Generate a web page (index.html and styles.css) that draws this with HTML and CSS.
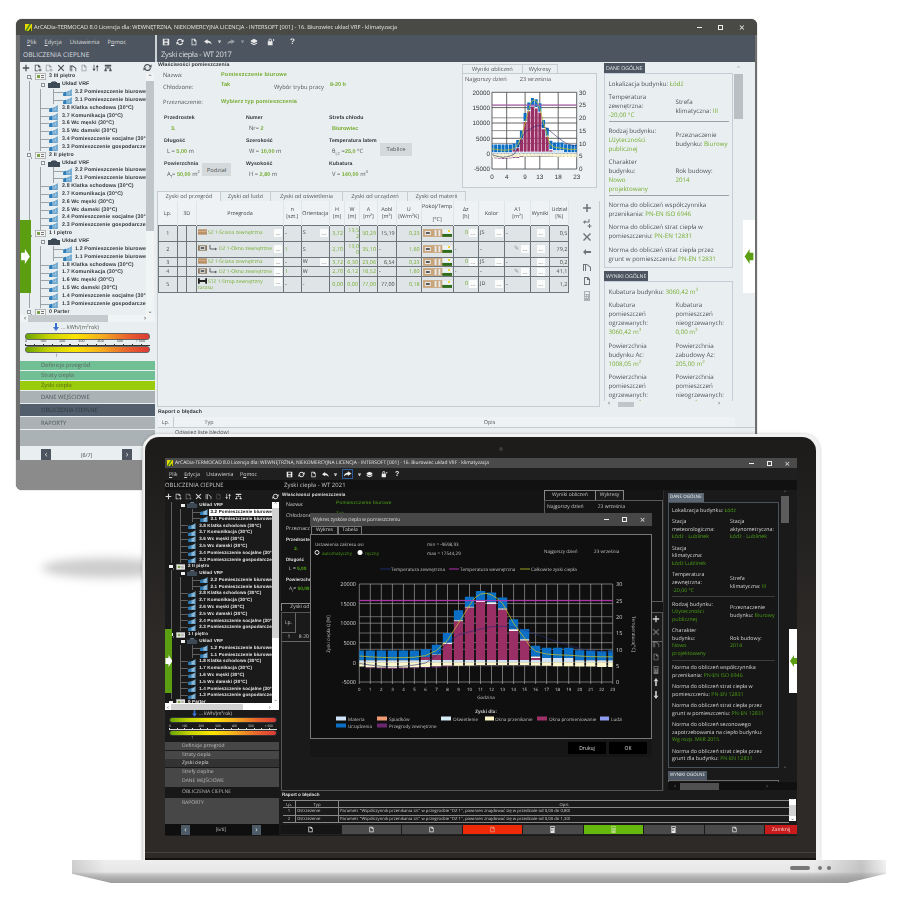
FILE: index.html
```html
<!DOCTYPE html>
<html lang="pl">
<head>
<meta charset="utf-8">
<title>ArCADia-TERMOCAD</title>
<link rel="stylesheet" href="styles.css">
</head>
<body>
<svg class="defs" aria-hidden="true">
  <defs>
    <symbol id="rm" viewBox="0 0 10 8"><path fill="#2f7db8" d="M0 4l3-1 1 1v4H0z"/><path fill="#6fa8cf" d="M4 8V3l3-1 3-2v8z"/><path fill="#e8f2f8" d="M5 5h1v1H5zM7 3h1v1H7zM7 5h1v1H7z"/></symbol>
    <symbol id="sys" viewBox="0 0 12 7"><path fill="#3d4a55" d="M0 2h3V1h6v1h3v5H0z"/><path fill="#8d9aa5" d="M4 0h4v1H4z"/></symbol>
    <symbol id="flr" viewBox="0 0 11 7"><path fill="#f4f4f4" stroke="#777" stroke-width=".6" d="M.3.3h10.4v6.4H.3z"/><path fill="#7da04a" d="M2 2h3v3H2z"/><path fill="#777" d="M6 2h3v1H6zM6 4h3v1H6z"/></symbol>
    <symbol id="i-plus" viewBox="0 0 10 10"><path d="M4.2 1h1.6v3.2H9v1.6H5.8V9H4.2V5.8H1V4.2h3.2z"/></symbol>
    <symbol id="i-x" viewBox="0 0 10 10"><path d="M2 1l3 3 3-3 1 1-3 3 3 3-1 1-3-3-3 3-1-1 3-3-3-3z"/></symbol>
    <symbol id="i-docp" viewBox="0 0 10 10"><path d="M1 1h5l2 2v2H7V4H5V2H2v6h3v1H1z"/><path d="M7 5.500h1V7h1.500v1H8v1.500H7V8H5.500V7H7z"/></symbol>
    <symbol id="i-roof" viewBox="0 0 10 10"><path d="M1 9V2h4l4 3v4H8V5.500L4.700 3H4v6H3V3H2v6z"/></symbol>
    <symbol id="i-doc" viewBox="0 0 10 10"><path fill-rule="evenodd" d="M2 1h4l2 2v6H2zM3 2v6h4V4H5V2z"/></symbol>
    <symbol id="i-sort" viewBox="0 0 10 10"><path d="M2 1h1v5h1.500L2.500 9 .5 6H2zM7 9H6V4H4.500l2-3 2 3H7z"/></symbol>
    <symbol id="i-tree" viewBox="0 0 10 10"><path d="M1 1h8v2H5.500v1.500H8.500V7h1v2h-3V7h1V5.500h-5V7h1v2h-3V7h1V4.500h3V3H1z"/></symbol>
    <symbol id="i-sync" viewBox="0 0 10 10"><path d="M5 1a4 4 0 0 1 3.300 1.700L9.500 1.500V5H6l1.400-1.400A3 3 0 0 0 2.200 4.500H1.100A4 4 0 0 1 5 1zM5 9a4 4 0 0 1-3.300-1.700L.5 8.500V5H4L2.600 6.400a3 3 0 0 0 5.200-.9h1.100A4 4 0 0 1 5 9z"/></symbol>
    <symbol id="i-save" viewBox="0 0 10 10"><path fill-rule="evenodd" d="M1 1h7.500L9 1.500V9H1zM3 2v2.500h4V2zM3 6v2h4V6z"/></symbol>
    <symbol id="i-undo" viewBox="0 0 10 10"><path d="M4.500 1.500L0 4.500l4.500 3V6c2.500 0 4 .8 5 2.500C9.500 5.500 7.500 3.500 4.500 3.200z"/></symbol>
    <symbol id="i-redo" viewBox="0 0 10 10"><path d="M5.500 1.500L10 4.500l-4.500 3V6c-2.500 0-4 .8-5 2.500C.5 5.500 2.500 3.500 5.500 3.200z"/></symbol>
    <symbol id="i-drop" viewBox="0 0 10 10"><path d="M2 2h6v1H2zM2 4.500h6L5 8.500z"/></symbol>
    <symbol id="i-stack" viewBox="0 0 10 10"><path d="M5 1l4 2v1.500L5 6.500 1 4.500V3zM1 5.500l4 2 4-2v1.500l-4 2-4-2z"/></symbol>
    <symbol id="i-lock" viewBox="0 0 10 10"><path fill-rule="evenodd" d="M1 4h1V2.500a2 2 0 0 1 4 0V4h1v5H1zM3 4h2V2.500a1 1 0 0 0-2 0z"/><path d="M7.500 1l2 1.500-2 1.500z"/></symbol>
    <symbol id="i-back" viewBox="0 0 10 10"><path d="M4 2L1 5l3 3V6h5V4H4z"/></symbol>
    <symbol id="i-ins" viewBox="0 0 10 10"><path d="M1 4l2.500-2v1.500h3V1h1v3.500h-4.500V6zM7 6h1v1.500h1.500v1H8V10H7V8.500H5.500v-1H7z"/></symbol>
    <symbol id="i-calc" viewBox="0 0 10 10"><path fill-rule="evenodd" d="M2 0h6v10H2zM3 1v2h4V1zM3 4v1h1V4zM5 4v1h1V4zM3 6v1h1V6zM5 6v1h1V6z"/></symbol>
    <symbol id="i-up" viewBox="0 0 10 10"><path d="M5 0l3 4H6v6H4V4H2z"/></symbol>
    <symbol id="i-down" viewBox="0 0 10 10"><path d="M5 10L2 6h2V0h2v6h2z"/></symbol>
    <symbol id="logo" viewBox="0 0 8 8"><path fill="#e8d800" d="M0 0h8v8H0z"/><path fill="#3f8a1e" d="M0 8L5 0h2L2 8z"/><path fill="#1d4a10" d="M4 8l3-4v4z"/></symbol>
    <symbol id="strip" viewBox="0 0 30 8"><path fill="#c9a57c" d="M0 0h30v8H0z"/><path fill="#e8e8e8" d="M2 2h6v4H2zM12 1h2v6h-2zM16 1h2v6h-2z"/><path fill="#555" d="M3 3h4v2H3z"/><path fill="#ecf3f5" d="M20 0h10v5H20z"/><path fill="#2e6d1c" d="M20 5h10v3H20z"/><path fill="#f1d21c" d="M26 1h2v2h-2z"/></symbol>
    <symbol id="sc-w" viewBox="0 0 10 6"><path fill="#b9926a" d="M0 0h10v6H0z"/><path fill="#d5b28c" d="M0 2h10v1H0z"/></symbol>
    <symbol id="sc-o" viewBox="0 0 10 6"><path fill="#8e7a62" d="M0 0h10v6H0z"/><path fill="#dfe4e6" d="M2 1h6v4H2z"/><path fill="#555" d="M3 2h4v2H3z"/></symbol>
    <symbol id="sc-s" viewBox="0 0 10 6"><path fill="#222" d="M0 0h2v6H0zM8 0h2v6H8zM2 2h6v2H2z"/></symbol>
    <symbol id="sc-l" viewBox="0 0 10 6"><path fill="none" stroke="#444" stroke-width=".8" d="M2 0v4h6M7 3l1.500 1L7 5"/></symbol>
    <g id="bars">
      <path class="b-blue" d="M-.42 3h.84V.5h-.84zM.58 3h.84V.5h-.84zM1.580 3h.84V.5h-.84zM2.580 3h.84V.5h-.84zM3.580 3h.84V.5h-.84zM4.580 3h.84V.5h-.84zM5.580 3.300h.84V1.300h-.84zM6.580 4.500h.84V2h-.84zM7.580 7.500h.84V5h-.84zM8.580 13.300h.84V10.700h-.84zM9.580 16.700h.84V14.200h-.84zM10.580 18.200h.84V15.700h-.84zM11.580 17.800h.84V15.300h-.84zM12.580 16.500h.84V13.700h-.84zM13.580 11h.84V8.400h-.84zM14.580 8.500h.84V5.900h-.84zM15.580 4.200h.84V1.500h-.84zM16.580 3.700h.84V1.100h-.84zM17.580 3.700h.84V1.100h-.84zM18.580 3.700h.84V1.100h-.84zM19.580 3.100h.84V.5h-.84zM20.580 3h.84V.5h-.84zM21.580 2.900h.84V.5h-.84zM22.580 3h.84V.5h-.84z"/>
      <path class="b-white" d="M6.580 2h.84V1.800h-.84zM7.580 5h.84V4.700h-.84zM8.580 10.700h.84V10.400h-.84zM9.580 14.200h.84V13.900h-.84zM10.580 15.700h.84V15.400h-.84zM11.580 15.300h.84V14.800h-.84zM12.580 13.700h.84V13.400h-.84zM13.580 8.400h.84V8h-.84zM14.580 5.900h.84V5.500h-.84zM15.580 1.500h.84V1.100h-.84z"/>
      <path class="b-purple" d="M5.580 1.300h.84V.6h-.84zM6.580 1.800h.84V.6h-.84zM7.580 4.700h.84V.6h-.84zM8.580 10.400h.84V.6h-.84zM9.580 13.900h.84V.6h-.84zM10.580 15.400h.84V.6h-.84zM11.580 14.800h.84V.6h-.84zM12.580 13.400h.84V.6h-.84zM13.580 8h.84V.6h-.84zM14.580 5.500h.84V.6h-.84zM15.580 1.100h.84V.6h-.84z"/>
      <path class="b-light" d="M-.42 .5h.84V0h-.84zM.58 .5h.84V0h-.84zM1.580 .5h.84V0h-.84zM2.580 .5h.84V0h-.84zM3.580 .5h.84V0h-.84zM4.580 .5h.84V0h-.84zM5.580 .6h.84V0h-.84zM6.580 .6h.84V0h-.84zM7.580 .6h.84V0h-.84zM8.580 .6h.84V0h-.84zM9.580 .6h.84V0h-.84zM10.580 .6h.84V0h-.84zM11.580 .6h.84V0h-.84zM12.580 .6h.84V0h-.84zM13.580 .6h.84V0h-.84zM14.580 .6h.84V0h-.84zM15.580 .6h.84V0h-.84zM16.580 1.100h.84V0h-.84zM17.580 1.100h.84V0h-.84zM18.580 1.100h.84V0h-.84zM19.580 .5h.84V0h-.84zM20.580 .5h.84V0h-.84zM21.580 .5h.84V0h-.84zM22.580 .5h.84V0h-.84z"/>
      <path class="b-cream" d="M-.42 0h.84V-1.100h-.84zM.58 0h.84V-1.300h-.84zM1.580 0h.84V-1.400h-.84zM2.580 0h.84V-1.500h-.84zM3.580 0h.84V-1.400h-.84zM4.580 0h.84V-1.300h-.84zM5.580 0h.84V-1.200h-.84zM6.580 0h.84V-1.100h-.84zM7.580 0h.84V-.9h-.84zM8.580 0h.84V-.9h-.84zM9.580 0h.84V-.8h-.84zM10.580 0h.84V-.7h-.84zM11.580 0h.84V-.7h-.84zM12.580 0h.84V-.7h-.84zM13.580 0h.84V-.7h-.84zM14.580 0h.84V-.7h-.84zM15.580 0h.84V-.8h-.84zM16.580 0h.84V-.9h-.84zM17.580 0h.84V-1h-.84zM18.580 0h.84V-1h-.84zM19.580 0h.84V-1.100h-.84zM20.580 0h.84V-1.100h-.84zM21.580 0h.84V-1.200h-.84zM22.580 0h.84V-1.200h-.84z"/>
      <path class="b-dark" d="M.58 -1.300h.84v-.2h-.84zM1.580 -1.400h.84v-.2h-.84zM2.580 -1.500h.84v-.2h-.84zM3.580 -1.400h.84v-.2h-.84zM4.580 -1.300h.84v-.2h-.84zM5.580 -1.200h.84v-.2h-.84zM6.580 -1.100h.84v-.2h-.84zM7.580 -.9h.84v-.2h-.84z"/>
      <polyline class="l-navy" points="0,-.3 1,-.7 2,-1 3,-1.2 4,-1 5,-.7 6,-.2 7,1.800 8,5 9,7 10,7.800 11,8.500 12,9.100 13,9.200 14,9 15,8.200 16,7.200 17,6.200 18,5.200 19,4.300 20,3.500 21,3 22,2.700 23,2.600"/>
      <polyline class="l-olive" points="0,1.600 1,1.400 2,1.250 3,1.150 4,1.200 5,1.300 6,1.700 7,3 8,5.600 9,10 10,14.500 10.500,16.500 11,17.400 11.500,17.600 12,17.200 12.500,16.300 13,15 13.500,12.500 14,10 14.500,8 15,6.200 15.500,4 16,2.800 17,2.100 18,1.900 19,1.800 20,1.600 21,1.450 22,1.400 23,1.400"/>
    </g>
    <clipPath id="clip-s"><rect x="492" y="80" width="84.700" height="100"/></clipPath>
    <clipPath id="clip-b"><rect x="359.300" y="570" width="253.400" height="120"/></clipPath>
  </defs>
</svg>

<main class="canvas">
  <div class="shadow"></div>

  <!-- back window -->
  <section class="win">
    <header class="w-title">
      <svg class="w-logo"><use href="#logo"/></svg>
      <span class="w-title-text">ArCADia-TERMOCAD 8.0 Licencja dla: WEWNĘTRZNA, NIEKOMERCYJNA LICENCJA - INTERSOFT [001] - 16. Biurowiec układ VRF - klimatyzacja</span>
      <span class="w-ctrls"><i class="c-min"></i><i class="c-max"></i><i class="c-x">×</i></span>
    </header>
    <div class="w-inner">
      <div class="w-head">
        <div class="w-head-l">
          <nav class="w-menu"><span><u>P</u>lik</span><span><u>E</u>dycja</span><span>Ustawienia</span><span>P<u>o</u>moc</span></nav>
          <div class="w-h1">OBLICZENIA CIEPLNE</div>
        </div>
        <div class="w-head-r">
          <div class="w-tools">
            <svg><use href="#i-save"/></svg><svg><use href="#i-sync"/></svg><svg><use href="#i-doc"/></svg><svg><use href="#i-undo"/></svg><svg class="sm"><use href="#i-drop"/></svg><svg class="dim"><use href="#i-redo"/></svg><svg class="sm dim"><use href="#i-drop"/></svg><svg><use href="#i-stack"/></svg><svg class="gap"><use href="#i-lock"/></svg><b>?</b>
          </div>
          <div class="w-h2">Zyski ciepła - WT 2017</div>
        </div>
      </div>
      <div class="w-body">
        <aside class="left">
          <div class="ltools">
            <svg><use href="#i-plus"/></svg><svg><use href="#i-docp"/></svg><svg class="dim"><use href="#i-docp"/></svg><svg><use href="#i-x"/></svg><svg><use href="#i-roof"/></svg><svg class="dim"><use href="#i-doc"/></svg><svg><use href="#i-sort"/></svg><svg><use href="#i-tree"/></svg><svg class="push"><use href="#i-sync"/></svg>
          </div>
          <div class="treebox">
            <div class="tree">
              <div class="tr l0"><i class="exp"></i><svg class="ti"><use href="#flr"/></svg>3 III piętro</div>
              <div class="tr l1"><i class="exp"></i><svg class="ti"><use href="#sys"/></svg>Układ VRF</div>
              <div class="tr l3"><svg class="ti"><use href="#rm"/></svg>3.2 Pomieszczenie biurowe</div>
              <div class="tr l3"><svg class="ti"><use href="#rm"/></svg>3.1 Pomieszczenie biurowe</div>
              <div class="tr l2"><svg class="ti"><use href="#rm"/></svg>3.8 Klatka schodowa (30°C)</div>
              <div class="tr l2"><svg class="ti"><use href="#rm"/></svg>3.7 Komunikacja (30°C)</div>
              <div class="tr l2"><svg class="ti"><use href="#rm"/></svg>3.6 Wc męski (30°C)</div>
              <div class="tr l2"><svg class="ti"><use href="#rm"/></svg>3.5 Wc damski (30°C)</div>
              <div class="tr l2"><svg class="ti"><use href="#rm"/></svg>3.4 Pomieszczenie socjalne (30°C)</div>
              <div class="tr l2"><svg class="ti"><use href="#rm"/></svg>3.3 Pomieszczenie gospodarcze</div>
              <div class="tr l0"><i class="exp"></i><svg class="ti"><use href="#flr"/></svg>2 II piętro</div>
              <div class="tr l1"><i class="exp"></i><svg class="ti"><use href="#sys"/></svg>Układ VRF</div>
              <div class="tr l3"><svg class="ti"><use href="#rm"/></svg>2.2 Pomieszczenie biurowe</div>
              <div class="tr l3"><svg class="ti"><use href="#rm"/></svg>2.1 Pomieszczenie biurowe</div>
              <div class="tr l2"><svg class="ti"><use href="#rm"/></svg>2.8 Klatka schodowa (30°C)</div>
              <div class="tr l2"><svg class="ti"><use href="#rm"/></svg>2.7 Komunikacja (30°C)</div>
              <div class="tr l2"><svg class="ti"><use href="#rm"/></svg>2.6 Wc męski (30°C)</div>
              <div class="tr l2"><svg class="ti"><use href="#rm"/></svg>2.5 Wc damski (30°C)</div>
              <div class="tr l2"><svg class="ti"><use href="#rm"/></svg>2.4 Pomieszczenie socjalne (30°C)</div>
              <div class="tr l2"><svg class="ti"><use href="#rm"/></svg>2.3 Pomieszczenie gospodarcze</div>
              <div class="tr l0"><i class="exp"></i><svg class="ti"><use href="#flr"/></svg>1 I piętro</div>
              <div class="tr l1"><i class="exp"></i><svg class="ti"><use href="#sys"/></svg>Układ VRF</div>
              <div class="tr l3"><svg class="ti"><use href="#rm"/></svg>1.2 Pomieszczenie biurowe</div>
              <div class="tr l3"><svg class="ti"><use href="#rm"/></svg>1.1 Pomieszczenie biurowe</div>
              <div class="tr l2"><svg class="ti"><use href="#rm"/></svg>1.8 Klatka schodowa (30°C)</div>
              <div class="tr l2"><svg class="ti"><use href="#rm"/></svg>1.7 Komunikacja (30°C)</div>
              <div class="tr l2"><svg class="ti"><use href="#rm"/></svg>1.6 Wc męski (30°C)</div>
              <div class="tr l2"><svg class="ti"><use href="#rm"/></svg>1.5 Wc damski (30°C)</div>
              <div class="tr l2"><svg class="ti"><use href="#rm"/></svg>1.4 Pomieszczenie socjalne (30°C)</div>
              <div class="tr l2"><svg class="ti"><use href="#rm"/></svg>1.3 Pomieszczenie gospodarcze</div>
              <div class="tr l0"><i class="exp"></i><svg class="ti"><use href="#flr"/></svg>0 Parter</div>
            </div>
            <div class="vscroll"><span class="sb-up">⌃</span><i class="thumb"></i><span class="sb-dn">⌄</span></div>
          </div>
          <div class="hscroll"><span>‹</span><i></i><span>›</span></div>
          <div class="scale">
            <div class="sc-top"><svg class="sc-arrow" viewBox="0 0 6 8"><path fill="#3d6fd0" d="M2 0h2v4h2L3 8 0 4h2z"/></svg><span>... kWh/(m²rok)</span></div>
            <div class="sc-bar"></div>
            <div class="sc-labels"><span>0</span><span>100</span><span>200</span><span>300</span><span>400</span><span>500</span><span>&gt; 500</span></div>
            <div class="sc-ticks"></div>
            <div class="sc-bar"></div>
            <div class="sc-pin">↑</div>
          </div>
          <nav class="lnav">
            <a class="n-g">Definicje przegród</a>
            <a class="n-g">Straty ciepła</a>
            <a class="n-a">Zyski ciepła</a>
            <a class="n-m">DANE WEJŚCIOWE</a>
            <a class="n-m n-on">OBLICZENIA CIEPLNE</a>
            <a class="n-m">RAPORTY</a>
            <a class="n-e"></a>
          </nav>
          <div class="pager"><i>‹</i><span>[6/7]</span><i>›</i></div>
        </aside>
        <div class="center">
          <div class="upper">
            <div class="mainp">
              <div class="top">
                <form class="form">
                  <div class="f-title">Właściwości pomieszczenia</div>
                  <div class="f-row f-r1"><span class="f-lab">Nazwa:</span><span class="f-val">Pomieszczenie biurowe</span></div>
                  <div class="f-row f-r2"><span class="f-lab">Chłodzone:</span><span class="f-val f-s">Tak</span><span class="f-lab f-w">Wybór trybu pracy</span><span class="f-val f-s">8-20 h</span></div>
                  <div class="f-row f-r3"><span class="f-lab">Przeznaczenie:</span><span class="f-val">Wybierz typ pomieszczenia</span></div>
                  <div class="f-grid">
                    <div class="cell"><b>Przedrostek</b><p class="ind"><em>3.</em></p></div>
                    <div class="cell"><b>Numer</b><p>Nr= <em>2</em></p></div>
                    <div class="cell"><b>Strefa chłodu</b><p><em>Biurowiec</em></p></div>
                    <div class="cell"><b>Długość</b><p>L = <em>5,00</em> m</p></div>
                    <div class="cell"><b>Szerokość</b><p>W = <em>10,00</em> m</p></div>
                    <div class="cell"><b>Temperatura latem</b><p class="withbtn"><span>θ<sub>i,C</sub> =<em>25,0</em> °C</span><button type="button" class="btn btn-t">Tablice</button></p></div>
                    <div class="cell cell-pw"><b>Powierzchnia</b><p>A<sub>f</sub>= <em>50,00</em> m<sup>2</sup></p><button type="button" class="btn btn-p">Podział</button></div>
                    <div class="cell"><b>Wysokość</b><p>H = <em>2,80</em> m</p></div>
                    <div class="cell"><b>Kubatura</b><p>V = <em>140,00</em> m<sup>3</sup></p></div>
                  </div>
                </form>
                <div class="cpanel">
                  <div class="ctabs"><span>Wyniki obliczeń</span><span class="on">Wykresy</span></div>
                  <div class="cbox">
                    <div class="cinfo"><span>Najgorszy dzień</span><span>23 września</span></div>
                    <svg class="chart-s" viewBox="462 84 135 104">
                      <rect x="492" y="92.300" width="84.700" height="76.700" class="bgw"/>
                      <path class="g-s" d="M492 92.300V169M506.700 92.300V169M525.100 92.300V169M539.800 92.300V169M558.200 92.300V169M576.700 92.300V169M492 92.300H576.700M492 107.600H576.700M492 123H576.700M492 138.300H576.700M492 153.700H576.700M492 169H576.700"/>
                      <path class="g-s2" d="M492 105.100H576.700M492 117.800H576.700M492 130.600H576.700M492 143.400H576.700M492 156.200H576.700"/>
                      <g clip-path="url(#clip-s)"><use href="#bars" transform="translate(492 153.700) scale(3.680 -3.060)"/></g>
                      <path class="l-mag" d="M492 105.100H576.700"/>
                      <g class="t-s t-end"><text x="490" y="94.500">20000</text><text x="490" y="109.800">15000</text><text x="490" y="125.200">10000</text><text x="490" y="140.500">5000</text><text x="490" y="155.900">0</text><text x="490" y="171.200">-5000</text></g>
                      <g class="t-s"><text x="579" y="94.500">30</text><text x="579" y="107.300">25</text><text x="579" y="120">20</text><text x="579" y="132.800">15</text><text x="579" y="145.600">10</text><text x="579" y="158.400">5</text><text x="579" y="171.200">0</text></g>
                      <g class="t-s t-mid"><text x="492" y="179">0</text><text x="506.700" y="179">4</text><text x="525.100" y="179">9</text><text x="539.800" y="179">13</text><text x="558.200" y="179">18</text><text x="576.700" y="179">23</text></g>
                    </svg>
                  </div>
                </div>
              </div>
              <div class="ttabs"><span class="on">Zyski od przegród</span><span>Zyski od ludzi</span><span>Zyski od oświetlenia</span><span>Zyski od urządzeń</span><span>Zyski od materii</span></div>
              <div class="tbox">
                <table class="grid">
                  <colgroup><col class="c1"><col class="c2"><col class="c3"><col class="c3b"><col class="c4"><col class="c5"><col class="c5"><col class="c6"><col class="c7"><col class="c8"><col class="c9"><col class="c10"><col class="c11"><col class="c11"><col class="c12"><col class="c13"></colgroup>
                  <thead>
                    <tr><th>Lp.</th><th>3D</th><th>Przegroda</th><th>n<br>[szt.]</th><th>Orientacja</th><th>H<br>[m]</th><th>W<br>[m]</th><th>A<br>[m²]</th><th>Aobl<br>[m²]</th><th>U<br>[W/m²K]</th><th>Pokój/Temp<br><br>[°C]</th><th>Δz<br>[h]</th><th>Kolor</th><th>A1<br>[m²]</th><th>Wyniki</th><th>Udział<br>[%]</th></tr>
                  </thead>
                  <tbody>
                    <tr class="r-a"><td class="m">1</td><td class="split"></td><td class="g"><span class="d">...</span><svg class="sw"><use href="#sc-w"/></svg>SZ 1-Ściana zewnętrzna</td><td>-</td><td><span class="d">...</span>S</td><td class="g n">3,72</td><td class="g n wrap">13,5 2</td><td class="g n">50,29</td><td class="n">15,19</td><td class="g n">0,23</td><td class="m"><svg class="st"><use href="#strip"/></svg></td><td class="g n"><span class="d">...</span>0</td><td><span class="d">...</span>JS</td><td>-</td><td class="m"><span class="d dc">...</span></td><td class="n">0,5</td></tr>
                    <tr class="r-a"><td class="m">2</td><td class="split"></td><td class="g"><span class="d">...</span><svg class="sw"><use href="#sc-o"/></svg><svg class="sl"><use href="#sc-l"/></svg>DZ 1-Okno zewnętrzne</td><td class="g">1</td><td>S</td><td class="g n">2,70</td><td class="g n wrap">13,0 0</td><td class="g n">35,10</td><td>-</td><td class="g n">1,60</td><td class="m"><svg class="st"><use href="#strip"/></svg></td><td>-</td><td>-</td><td><span class="d">...</span><span class="pen">✎</span></td><td class="m"><span class="d dc">...</span></td><td class="n">79,2</td></tr>
                    <tr class="r-b"><td class="m">3</td><td class="split"></td><td class="g"><span class="d">...</span><svg class="sw"><use href="#sc-w"/></svg>SZ 1-Ściana zewnętrzna</td><td>-</td><td><span class="d">...</span>W</td><td class="g n">3,72</td><td class="g n">6,30</td><td class="g n">23,06</td><td class="n">6,54</td><td class="g n">0,23</td><td class="m"><svg class="st"><use href="#strip"/></svg></td><td class="g n"><span class="d">...</span>0</td><td><span class="d">...</span>JS</td><td>-</td><td class="m"><span class="d dc">...</span></td><td class="n">0,2</td></tr>
                    <tr class="r-b"><td class="m">4</td><td class="split"></td><td class="g"><span class="d">...</span><svg class="sw"><use href="#sc-o"/></svg><svg class="sl"><use href="#sc-l"/></svg>DZ 1-Okno zewnętrzne</td><td class="g">1</td><td>W</td><td class="g n">2,70</td><td class="g n">6,12</td><td class="g n">16,52</td><td>-</td><td class="g n">1,60</td><td class="m"><svg class="st"><use href="#strip"/></svg></td><td>-</td><td>-</td><td><span class="d">...</span><span class="pen">✎</span></td><td class="m"><span class="d dc">...</span></td><td class="n">41,1</td></tr>
                    <tr class="r-a"><td class="m">5</td><td class="split"></td><td class="g lh"><span class="d">...</span><svg class="sw"><use href="#sc-s"/></svg>STZ 1-Strop zewnętrzny tarasu</td><td>-</td><td>-</td><td class="g n">0,00</td><td class="g n">0,00</td><td class="g n">77,00</td><td class="n">77,00</td><td class="g n">0,18</td><td class="m"><svg class="st"><use href="#strip"/></svg></td><td class="g n"><span class="d">...</span>0</td><td><span class="d">...</span>JD</td><td>-</td><td class="m"><span class="d dc">...</span></td><td class="n">1,2</td></tr>
                  </tbody>
                </table>
                <div class="ttools">
                  <svg><use href="#i-plus"/></svg><svg><use href="#i-ins"/></svg><svg><use href="#i-x"/></svg><svg><use href="#i-back"/></svg><svg><use href="#i-roof"/></svg><svg><use href="#i-doc"/></svg><svg class="dim"><use href="#i-calc"/></svg>
                </div>
              </div>
            </div>
            <div class="side">
              <div class="side-scroll">
                <div class="side-col">
                  <div class="tag">DANE OGÓLNE</div>
                  <div class="sbox">
                    <p>Lokalizacja budynku: <em>Łódź</em></p>
                    <div class="two"><p>Temperatura<br>zewnętrzna:<br><em>-20,00 °C</em></p><p>Strefa<br>klimatyczna: <em>III</em></p></div>
                    <hr>
                    <div class="two"><p>Rodzaj budynku:<br><em>Użyteczności<br>publicznej</em></p><p>Przeznaczenie<br>budynku: <em>Biurowy</em></p></div>
                    <div class="two"><p>Charakter<br>budynku:<br><em>Nowo<br>projektowany</em></p><p>Rok budowy:<br><em>2014</em></p></div>
                    <hr>
                    <p>Norma do obliczeń współczynnika<br>przenikania: <em>PN-EN ISO 6946</em></p>
                    <p>Norma do obliczeń strat ciepła w<br>pomieszczeniu: <em>PN-EN 12831</em></p>
                    <p>Norma do obliczeń strat ciepła przez<br>grunt w pomieszczeniu: <em>PN-EN 12831</em></p>
                  </div>
                  <div class="tag">WYNIKI OGÓLNE</div>
                  <div class="sbox">
                    <p>Kubatura budynku: <em>3060,42 m<sup>3</sup></em></p>
                    <div class="two"><p>Kubatura<br>pomieszczeń<br>ogrzewanych:<br><em>3060,42 m<sup>3</sup></em></p><p>Kubatura<br>pomieszczeń<br>nieogrzewanych:<br><em>0,00 m<sup>3</sup></em></p></div>
                    <div class="two"><p>Powierzchnia<br>budynku Ac:<br><em>1008,05 m<sup>2</sup></em></p><p>Powierzchnia<br>zabudowy Az:<br><em>205,00 m<sup>2</sup></em></p></div>
                    <div class="two"><p>Powierzchnia<br>pomieszczeń<br>ogrzewanych:<br><em>1008,05 m<sup>2</sup></em></p><p>Powierzchnia<br>pomieszczeń<br>nieogrzewanych:<br><em>0,00 m<sup>2</sup></em></p></div>
                  </div>
                </div>
                <div class="side-bar"><span>⌃</span><i></i></div>
              </div>
              <div class="side-h"><span>‹</span><i></i><span>›</span></div>
            </div>
          </div>
          <div class="report">
            <div class="rep-t">Raport o błędach</div>
            <div class="rep-h"><span>Lp.</span><span>Typ</span><span>Opis</span></div>
            <div class="rep-r">Odśwież listę błędów!</div>
          </div>
        </div>
      </div>
      <div class="handle-l"><svg viewBox="0 0 7 12"><path fill="#fff" d="M0 3h3V0l4 6-4 6V9H0z"/></svg></div>
      <div class="handle-r"><svg viewBox="0 0 7 12"><path fill="#5b9e12" d="M7 3H4V0L0 6l4 6V9h3z"/></svg></div>
    </div>
    <div class="w-base"></div>
  </section>

  <!-- laptop -->
  <section class="laptop">
    <div class="bezel">
      <i class="cam"></i>
      <div class="app">
        <header class="d-title">
          <svg class="d-logo"><use href="#logo"/></svg>
          <span class="d-title-text">ArCADia-TERMOCAD 8.0 Licencja dla: WEWNĘTRZNA, NIEKOMERCYJNA LICENCJA - INTERSOFT [001] - 16. Biurowiec układ VRF - klimatyzacja</span>
          <span class="d-ctrls"><i class="c-min"></i><i class="c-max"></i><i class="c-x">×</i></span>
        </header>
        <div class="d-head">
          <div class="d-head-l">
            <nav class="d-menu"><span><u>P</u>lik</span><span><u>E</u>dycja</span><span>Ustawienia</span><span>P<u>o</u>moc</span></nav>
            <div class="d-h1">OBLICZENIA CIEPLNE</div>
          </div>
          <div class="d-head-r">
            <div class="d-tools">
              <svg><use href="#i-save"/></svg><svg><use href="#i-sync"/></svg><svg><use href="#i-doc"/></svg><svg><use href="#i-undo"/></svg><svg class="sm"><use href="#i-drop"/></svg><svg class="hot"><use href="#i-redo"/></svg><svg class="sm"><use href="#i-drop"/></svg><svg><use href="#i-stack"/></svg><svg class="gap"><use href="#i-lock"/></svg><b>?</b>
            </div>
            <div class="d-h2">Zyski ciepła - WT 2021</div>
          </div>
        </div>
        <div class="d-body">
          <aside class="d-left">
            <div class="d-ltools">
              <svg><use href="#i-plus"/></svg><svg><use href="#i-docp"/></svg><svg class="dim"><use href="#i-docp"/></svg><svg><use href="#i-x"/></svg><svg><use href="#i-roof"/></svg><svg class="dim2"><use href="#i-doc"/></svg><svg><use href="#i-sort"/></svg><svg><use href="#i-tree"/></svg><svg class="push"><use href="#i-sync"/></svg>
            </div>
            <div class="d-treebox">
              <div class="tree d-tree">
                <div class="tr l1"><i class="exp"></i><svg class="ti"><use href="#sys"/></svg>Układ VRF</div>
                <div class="tr l3 sel"><svg class="ti"><use href="#rm"/></svg><span>3.2 Pomieszczenie biurowe</span></div>
                <div class="tr l3"><svg class="ti"><use href="#rm"/></svg>3.1 Pomieszczenie biurowe</div>
                <div class="tr l2"><svg class="ti"><use href="#rm"/></svg>3.8 Klatka schodowa (30°C)</div>
                <div class="tr l2"><svg class="ti"><use href="#rm"/></svg>3.7 Komunikacja (30°C)</div>
                <div class="tr l2"><svg class="ti"><use href="#rm"/></svg>3.6 Wc męski (30°C)</div>
                <div class="tr l2"><svg class="ti"><use href="#rm"/></svg>3.5 Wc damski (30°C)</div>
                <div class="tr l2"><svg class="ti"><use href="#rm"/></svg>3.4 Pomieszczenie socjalne (30°C)</div>
                <div class="tr l2"><svg class="ti"><use href="#rm"/></svg>3.3 Pomieszczenie gospodarcze</div>
                <div class="tr l0"><i class="exp"></i><svg class="ti"><use href="#flr"/></svg>2 II piętro</div>
                <div class="tr l1"><i class="exp"></i><svg class="ti"><use href="#sys"/></svg>Układ VRF</div>
                <div class="tr l3"><svg class="ti"><use href="#rm"/></svg>2.2 Pomieszczenie biurowe</div>
                <div class="tr l3"><svg class="ti"><use href="#rm"/></svg>2.1 Pomieszczenie biurowe</div>
                <div class="tr l2"><svg class="ti"><use href="#rm"/></svg>2.8 Klatka schodowa (30°C)</div>
                <div class="tr l2"><svg class="ti"><use href="#rm"/></svg>2.7 Komunikacja (30°C)</div>
                <div class="tr l2"><svg class="ti"><use href="#rm"/></svg>2.6 Wc męski (30°C)</div>
                <div class="tr l2"><svg class="ti"><use href="#rm"/></svg>2.5 Wc damski (30°C)</div>
                <div class="tr l2"><svg class="ti"><use href="#rm"/></svg>2.4 Pomieszczenie socjalne (30°C)</div>
                <div class="tr l2"><svg class="ti"><use href="#rm"/></svg>2.3 Pomieszczenie gospodarcze</div>
                <div class="tr l0"><i class="exp"></i><svg class="ti"><use href="#flr"/></svg>1 I piętro</div>
                <div class="tr l1"><i class="exp"></i><svg class="ti"><use href="#sys"/></svg>Układ VRF</div>
                <div class="tr l3"><svg class="ti"><use href="#rm"/></svg>1.2 Pomieszczenie biurowe</div>
                <div class="tr l3"><svg class="ti"><use href="#rm"/></svg>1.1 Pomieszczenie biurowe</div>
                <div class="tr l2"><svg class="ti"><use href="#rm"/></svg>1.8 Klatka schodowa (30°C)</div>
                <div class="tr l2"><svg class="ti"><use href="#rm"/></svg>1.7 Komunikacja (30°C)</div>
                <div class="tr l2"><svg class="ti"><use href="#rm"/></svg>1.6 Wc męski (30°C)</div>
                <div class="tr l2"><svg class="ti"><use href="#rm"/></svg>1.5 Wc damski (30°C)</div>
                <div class="tr l2"><svg class="ti"><use href="#rm"/></svg>1.4 Pomieszczenie socjalne (30°C)</div>
                <div class="tr l2"><svg class="ti"><use href="#rm"/></svg>1.3 Pomieszczenie gospodarcze</div>
                <div class="tr l0"><i class="exp"></i><svg class="ti"><use href="#flr"/></svg>0 Parter</div>
              </div>
              <div class="d-vscroll"><span>⌃</span><i></i><span class="dn">⌄</span></div>
            </div>
            <div class="d-hscroll"><span>‹</span><i></i><span>›</span></div>
            <div class="scale d-scale">
              <div class="sc-top"><svg class="sc-arrow" viewBox="0 0 6 8"><path fill="#3d6fd0" d="M2 0h2v4h2L3 8 0 4h2z"/></svg><span>... kWh/(m²rok)</span></div>
              <div class="sc-bar"></div>
              <div class="sc-labels"><span>0</span><span>100</span><span>200</span><span>300</span><span>400</span><span>500</span><span>&gt; 500</span></div>
              <div class="sc-ticks"></div>
              <div class="sc-bar"></div>
              <div class="sc-pin">↑</div>
            </div>
            <nav class="d-lnav">
              <a class="s">Definicje przegród</a>
              <a class="s">Straty ciepła</a>
              <a class="s on2">Zyski ciepła</a>
              <a class="s">Strefy cieplne</a>
              <a class="m">DANE WEJŚCIOWE</a>
              <a class="m on">OBLICZENIA CIEPLNE</a>
              <a class="m">RAPORTY</a>
              <a class="e"></a>
            </nav>
            <div class="d-pager"><i>‹</i><span>[6/8]</span><i>›</i></div>
          </aside>
          <div class="d-center">
            <div class="d-upper">
              <div class="d-main">
                <div class="d-form">
                  <div class="f-title">Właściwości pomieszczenia</div>
                  <div class="df-row"><span>Nazwa:</span><em>Pomieszczenie biurowe</em></div>
                  <div class="df-row"><span>Chłodzone:</span><em>Tak</em></div>
                  <div class="df-row df-gap"><span>Przeznaczenie:</span></div>
                  <div class="df-cell"><b>Przedrostek</b><p class="ind"><em>3.</em></p></div>
                  <div class="df-cell"><b>Długość</b><p>L = <em>5,00</em></p></div>
                  <div class="df-cell"><b>Powierzchnia</b><p>A<sub>f</sub>= <em>50,00</em></p></div>
                </div>
                <div class="d-ctabs"><span>Wyniki obliczeń</span><span class="on">Wykresy</span></div>
                <div class="d-cbox"><div class="d-cinfo"><span>Najgorszy dzień</span><span>23 września</span></div></div>
                <div class="d-tb">
                  <div class="d-ttabs"><span>Zyski od przegród</span></div>
                  <div class="d-tbox">
                    <div class="d-th">Lp.</div>
                    <div class="d-tr"><span>1</span><span>8-20 h</span></div>
                    <div class="d-rtools">
                      <svg><use href="#i-plus"/></svg><svg class="dim"><use href="#i-x"/></svg><svg class="dim"><use href="#i-roof"/></svg><svg class="dim"><use href="#i-doc"/></svg><svg class="dim"><use href="#i-calc"/></svg><svg><use href="#i-up"/></svg><svg><use href="#i-down"/></svg>
                    </div>
                  </div>
                </div>
              </div>
              <div class="d-side">
                <div class="d-side-scroll">
                  <div class="d-side-col">
                    <div class="d-tag">DANE OGÓLNE</div>
                    <div class="d-sbox">
                      <p>Lokalizacja budynku: <em>Łódź</em></p>
                      <div class="two"><p>Stacja<br>meteorologiczna:<br><em>Łódź - Lublinek</em></p><p>Stacja<br>aktynometryczna:<br><em>Łódź - Lublinek</em></p></div>
                      <div class="two"><p>Stacja<br>klimatyczna:<br><em>Łódź Lublinek</em></p></div>
                      <div class="two"><p>Temperatura<br>zewnętrzna:<br><em>-20,00 °C</em></p><p>Strefa<br>klimatyczna: <em>III</em></p></div>
                      <hr>
                      <div class="two"><p>Rodzaj budynku:<br><em>Użyteczności<br>publicznej</em></p><p>Przeznaczenie<br>budynku: <em>Biurowy</em></p></div>
                      <div class="two"><p>Charakter<br>budynku:<br><em>Nowo<br>projektowany</em></p><p>Rok budowy:<br><em>2014</em></p></div>
                      <hr>
                      <p>Norma do obliczeń współczynnika<br>przenikania: <em>PN-EN ISO 6946</em></p>
                      <p>Norma do obliczeń strat ciepła w<br>pomieszczeniu: <em>PN-EN 12831</em></p>
                      <p>Norma do obliczeń strat ciepła przez<br>grunt w pomieszczeniu: <em>PN-EN 12831</em></p>
                      <p>Norma do obliczeń sezonowego<br>zapotrzebowania na ciepło budynku:<br><em>Wg rozp. MIiR 2015</em></p>
                      <p>Norma do obliczeń strat ciepła przez<br>grunt dla budynku: <em>PN-EN 12831</em></p>
                    </div>
                    <div class="d-tag d-tag2">WYNIKI OGÓLNE</div>
                    <div class="d-sbox2"></div>
                  </div>
                  <div class="d-side-bar"><span>⌃</span><i></i><span class="dn">⌄</span></div>
                </div>
                <div class="d-side-h"><span>‹</span><i></i><span>›</span></div>
              </div>
            </div>
            <div class="d-report">
              <div class="d-rep-t">Raport o błędach</div>
              <div class="d-rep-grid">
                <div class="d-rep-h"><span>Lp.</span><span>Typ</span><span>Opis</span></div>
                <div class="d-rep-r"><span>1</span><span>Ostrzeżenie</span><span>Parametr "Współczynnik przenikania Uc" w przegrodzie "DZ 1", powinien znajdować się w przedziale od 0,00 do 0,80!</span></div>
                <div class="d-rep-r"><span>2</span><span>Ostrzeżenie</span><span>Parametr "Współczynnik przenikania Uc" w przegrodzie "DZ 1", powinien znajdować się w przedziale od 0,00 do 1,30!</span></div>
              </div>
              <div class="d-rep-sb"><span>⌃</span><i></i><span>⌄</span></div>
            </div>
            <div class="d-tabs">
              <a class="k"><svg><use href="#i-doc"/></svg></a><a><svg><use href="#i-doc"/></svg></a><a><svg><use href="#i-doc"/></svg></a><a class="r"><svg><use href="#i-doc"/></svg></a><a><svg><use href="#i-calc"/></svg></a><a class="gr"><svg><use href="#i-calc"/></svg></a><a><svg><use href="#i-calc"/></svg></a><a><svg><use href="#i-doc"/></svg></a><a class="close">Zamknij</a>
            </div>
          </div>
        </div>
        <div class="d-handle-l"><svg viewBox="0 0 7 12"><path fill="#fff" d="M0 3h3V0l4 6-4 6V9H0z"/></svg></div>
        <div class="d-handle-r"><svg viewBox="0 0 7 12"><path fill="#5b9e12" d="M7 3H4V0L0 6l4 6V9h3z"/></svg></div>

        <div class="dlg">
          <header class="dlg-t"><span>Wykres zysków ciepła w pomieszczeniu</span><span class="d-ctrls"><i class="c-min"></i><i class="c-max"></i><i class="c-x">×</i></span></header>
          <div class="dlg-tabs"><span class="on">Wykres</span><span>Tabela</span></div>
          <div class="dlg-box">
            <svg class="chart-b" viewBox="311 535 340 203">
              <g class="t-b"><text x="315" y="546">Ustawienia zakresu osi</text><text x="427" y="546">min = -9698,93</text><text x="427" y="555">max = 17544,29</text><text x="544" y="553">Najgorszy dzień</text><text x="594" y="553">23 września</text><text x="365" y="554.500" class="t-gr">ręczny</text><text x="322" y="554.500" class="t-gr">automatyczny</text>
                <text x="391" y="571">Temperatura zewnętrzna</text><text x="460" y="571">Temperatura wewnętrzna</text><text x="531" y="571">Całkowite zyski ciepła</text></g>
              <circle cx="317" cy="552.500" r="2" class="radio-on"/><circle cx="360" cy="552.500" r="2.500" class="radio"/>
              <path class="leg-n" d="M380 569h11"/><path class="leg-m" d="M449 569h10"/><path class="leg-o" d="M520 569h10"/>
              <path class="g-b" d="M359.300 584V682M370.300 584V682M381.300 584V682M392.400 584V682M403.400 584V682M414.400 584V682M425.400 584V682M436.400 584V682M447.500 584V682M458.500 584V682M469.500 584V682M480.500 584V682M491.500 584V682M502.500 584V682M513.600 584V682M524.600 584V682M535.600 584V682M546.600 584V682M557.600 584V682M568.700 584V682M579.700 584V682M590.700 584V682M601.700 584V682M612.700 584V682M359.300 584H612.700M359.300 603.600H612.700M359.300 623.200H612.700M359.300 642.700H612.700M359.300 662.300H612.700M359.300 682H612.700"/>
              <path class="g-b2" d="M359.300 600.300H612.700M359.300 616.700H612.700M359.300 633H612.700M359.300 649.300H612.700M359.300 665.700H612.700"/>
              <g clip-path="url(#clip-b)"><use href="#bars" transform="translate(359.300 662.300) scale(11.020 -3.920)"/></g>
              <path class="l-magb" d="M359.300 600.700H612.700"/>
              <path class="g-t" d="M359.300 682v2M370.300 682v2M381.300 682v2M392.400 682v2M403.400 682v2M414.400 682v2M425.400 682v2M436.400 682v2M447.500 682v2M458.500 682v2M469.500 682v2M480.500 682v2M491.500 682v2M502.500 682v2M513.600 682v2M524.600 682v2M535.600 682v2M546.600 682v2M557.600 682v2M568.700 682v2M579.700 682v2M590.700 682v2M601.700 682v2M612.700 682v2"/>
              <g class="t-n t-end"><text x="356" y="586.200">20000</text><text x="356" y="605.800">15000</text><text x="356" y="625.400">10000</text><text x="356" y="644.900">5000</text><text x="356" y="664.500">0</text><text x="356" y="684.200">-5000</text></g>
              <g class="t-n"><text x="616" y="586.200">30</text><text x="616" y="602.500">25</text><text x="616" y="618.900">20</text><text x="616" y="635.200">15</text><text x="616" y="651.500">10</text><text x="616" y="667.900">5</text><text x="616" y="684.200">0</text></g>
              <g class="t-h t-mid"><text x="359.300" y="691">0</text><text x="370.300" y="691">1</text><text x="381.300" y="691">2</text><text x="392.400" y="691">3</text><text x="403.400" y="691">4</text><text x="414.400" y="691">5</text><text x="425.400" y="691">6</text><text x="436.400" y="691">7</text><text x="447.500" y="691">8</text><text x="458.500" y="691">9</text><text x="469.500" y="691">10</text><text x="480.500" y="691">11</text><text x="491.500" y="691">12</text><text x="502.500" y="691">13</text><text x="513.600" y="691">14</text><text x="524.600" y="691">15</text><text x="535.600" y="691">16</text><text x="546.600" y="691">17</text><text x="557.600" y="691">18</text><text x="568.700" y="691">19</text><text x="579.700" y="691">20</text><text x="590.700" y="691">21</text><text x="601.700" y="691">22</text><text x="612.700" y="691">23</text></g>
              <text class="t-b t-mid" x="486" y="699">Godzina</text>
              <text class="t-b t-mid" transform="translate(330 634) rotate(-90)">Zyski ciepła Q [W]</text>
              <text class="t-b t-mid" transform="translate(632 634) rotate(90)">Temperatura[°C]</text>
              <text class="t-bb t-mid" x="486" y="713">Zyski dla:</text>
              <g class="t-b"><text x="348" y="720.500">Materia</text><text x="389" y="720.500">Spiadków</text><text x="453" y="720.500">Oświetlenie</text><text x="495" y="720.500">Okna przenikanie</text><text x="549" y="720.500">Okna promieniowanie</text><text x="611" y="720.500">Ludzi</text><text x="348" y="727.500">Urządzenia</text><text x="389" y="727.500">Przegrody zewnętrzne</text></g>
              <rect x="336" y="716.500" width="10" height="4" class="s1"/><rect x="377" y="716.500" width="10" height="4" class="s2"/><rect x="441" y="716.500" width="10" height="4" class="s3"/><rect x="485" y="716.500" width="9" height="4" class="s4"/><rect x="537" y="716.500" width="10" height="4" class="s5"/><rect x="600" y="716.500" width="9" height="4" class="s6"/><rect x="336" y="723.500" width="10" height="4" class="s7"/><rect x="377" y="723.500" width="10" height="4" class="s8"/>
            </svg>
          </div>
          <div class="dlg-btns"><button type="button">Drukuj</button><button type="button">OK</button></div>
        </div>
      </div>
      <div class="bez-line"></div>
    </div>
  </section>
  <div class="base"><i class="pill"></i><i class="dot"></i><i class="dot"></i></div>
</main>
</body>
</html>
```

FILE: styles.css
```css
*{box-sizing:border-box}
html,body{margin:0;padding:0;background:#fff}
body{font-family:"Open Sans","Liberation Sans",sans-serif;text-rendering:geometricPrecision}
em{font-style:normal}
i{font-style:normal}
.defs{position:absolute;width:0;height:0}
.canvas{position:relative;width:900px;height:900px;overflow:hidden;background:#fff}
.shadow{position:absolute;left:42px;top:558px;width:130px;height:20px;border-radius:50%;background:#cdcdcd;filter:blur(5px)}

/* ---------- back window ---------- */
.win{position:absolute;left:16px;top:19px;width:741px;height:471px;border-radius:6px 6px 6px 6px;background:#6f6f6f;overflow:hidden;filter:blur(.3px);display:flex;flex-direction:column;box-shadow:0 0 1px #555}
.w-title{height:16px;background:#494946;display:flex;align-items:center;color:#e8e8e8;font-size:5.660px;flex:none;padding-left:9px}
.w-logo{width:7px;height:7px;margin-right:2px;flex:none}
.w-title-text{flex:1;white-space:nowrap}
.w-ctrls{display:flex;align-items:center;gap:16px;margin-right:10px;width:50px}
.c-min{width:5px;height:1px;background:#eee;display:block}
.c-max{width:5px;height:5px;border:1px solid #eee;display:block}
.c-x{font-size:10px;line-height:8px;color:#eee;display:block}
.w-inner{position:relative;margin:0 2px 0 4px;height:425px;flex:none;background:#e9eff1}
.w-head{display:grid;grid-template-columns:135px 1fr;height:27px;background:#4d5660;color:#ddd}
.w-head-l{display:flex;flex-direction:column}
.w-head-r{border-left:2px solid #ccd3d7;display:flex;flex-direction:column}
.w-menu{height:13px;display:flex;align-items:center;gap:8px;padding-left:7px;font-size:5.8px;padding-top:1px}
.w-menu u{text-decoration:underline}
.w-h1{padding-left:3px;font-size:6.600px;line-height:14px;letter-spacing:.1px;color:#d9dde0}
.w-h2{padding-left:4px;font-size:7.600px;letter-spacing:-.3px;line-height:14px;color:#d9dde0}
.w-tools{height:13px;display:flex;align-items:center;padding-left:5px;color:#e8e8e8;fill:#e8e8e8;gap:6px}
.w-tools svg{width:8px;height:8px;flex:none}
.w-tools svg.sm{width:5px;height:7px;margin:0 -1px}
.w-tools svg.gap{margin-left:2px;width:10px}
.w-tools b{margin-left:8px;font:bold 8px "Liberation Sans",sans-serif}
.dim{opacity:.5}
.w-body{display:grid;grid-template-columns:135px 1fr;height:398px}

/* left */
.left{display:flex;flex-direction:column;min-width:0}
.ltools{height:11px;display:flex;align-items:center;gap:3.700px;padding-left:2px;fill:#4a4f55;flex:none}
.ltools svg{width:8px;height:8px;flex:none}
.ltools .push{margin-left:auto;margin-right:3px;width:9px;height:9px}
.treebox{height:242px;display:flex;flex:none;overflow:hidden}
.tree{--u:1;--rh:7.85px;--line:#9aa3a8;flex:1;min-width:0;overflow:hidden;font:bold 5.25px/1 "Liberation Sans",sans-serif;color:#33383c;letter-spacing:.13px}
.tr{height:var(--rh);display:flex;align-items:center;white-space:nowrap;overflow:hidden}
.exp{flex:none;width:calc(var(--u)*4px);height:calc(var(--u)*4px);border:.5px solid #8a9297;background:#f5f7f8}
.ti{flex:none}
.l0{padding-left:calc(var(--u)*7px);background:linear-gradient(var(--line),var(--line)) no-repeat calc(var(--u)*11px) 100%/1px 30%}
.l0 .exp{margin-right:calc(var(--u)*4px)}
.l0 .ti{width:calc(var(--u)*11px);height:calc(var(--u)*7px);margin-right:calc(var(--u)*3px)}
.l1{padding-left:calc(var(--u)*21px);background:linear-gradient(var(--line),var(--line)) no-repeat calc(var(--u)*9px) 0/1px 100%}
.l1 .exp{margin-right:calc(var(--u)*3px)}
.l1 .ti{width:calc(var(--u)*12px);height:calc(var(--u)*7px);margin-right:calc(var(--u)*2px)}
.l2{padding-left:calc(var(--u)*29px);background:linear-gradient(var(--line),var(--line)) no-repeat calc(var(--u)*9px) 0/1px 100%,linear-gradient(var(--line),var(--line)) no-repeat calc(var(--u)*20px) 0/1px 100%,linear-gradient(var(--line),var(--line)) no-repeat calc(var(--u)*20px) 50%/calc(var(--u)*9px) 1px}
.l2 .ti{width:calc(var(--u)*9px);height:calc(var(--u)*7px);margin-right:calc(var(--u)*4px)}
.l3{padding-left:calc(var(--u)*43px);background:linear-gradient(var(--line),var(--line)) no-repeat calc(var(--u)*9px) 0/1px 100%,linear-gradient(var(--line),var(--line)) no-repeat calc(var(--u)*20px) 0/1px 100%,linear-gradient(var(--line),var(--line)) no-repeat calc(var(--u)*33px) 0/1px 100%,linear-gradient(var(--line),var(--line)) no-repeat calc(var(--u)*33px) 50%/calc(var(--u)*10px) 1px}
.l3 .ti{width:calc(var(--u)*9px);height:calc(var(--u)*7px);margin-right:calc(var(--u)*3px)}
.vscroll{width:8px;flex:none;margin-right:1px;display:flex;flex-direction:column;align-items:center;background:#f1f4f5;font-size:6px;line-height:8px;color:#555}
.vscroll .sb-up,.vscroll .sb-dn{height:8px;flex:none}
.vscroll .thumb{display:block;width:100%;height:150px;background:#bfc6ca;margin-top:0}
.vscroll .sb-dn{margin-top:auto}
.hscroll{height:7px;flex:none;display:flex;align-items:center;background:#f1f4f5;font-size:7px;line-height:7px;color:#444;padding:0 1px 0 2px}
.hscroll span{width:6px;flex:none;text-align:center}
.hscroll i{display:block;width:80px;height:7px;background:#c4cace}
.hscroll span:last-child{margin-left:34px}
.scale{--sw:125px;--sh:7px;height:39px;flex:none;padding:1px 0 0 5px;position:relative}
.sc-top{display:flex;align-items:center;height:8px;padding-left:28px;font-size:5.5px;color:#555;gap:2px}
.sc-arrow{width:6px;height:8px;flex:none}
.sc-bar{width:var(--sw);height:var(--sh);border-radius:3px;border:.5px solid #666;background:linear-gradient(90deg,#6aa400,#c4d200 18%,#fde400 40%,#f5b21e 60%,#e8642c 82%,#dd3a36);margin-top:1.500px}
.sc-labels{display:flex;justify-content:space-between;width:calc(var(--sw) - 5px);height:4px;font-size:3.6px;line-height:4px;color:#333;margin-top:.5px}
.sc-ticks{width:var(--sw);height:2px;border-bottom:1px solid #333;background:repeating-linear-gradient(90deg,#333 0 1px,transparent 1px 8.900px)}
.sc-ticks+.sc-bar{margin-top:0}
.sc-pin{font:6px/6px "Liberation Sans",sans-serif;color:#444;padding-left:30px}
.lnav{display:flex;flex-direction:column;color:#59625f;font-size:5.800px;margin-top:0;gap:1px}
.lnav a{display:block;padding-left:21px;white-space:nowrap}
.n-g{height:9px;line-height:9px;background:#71bf94}
.n-a{height:9px;line-height:9px;background:#9acb0c;color:#5d6d10}
.n-m{height:12px;line-height:12px;background:#aab2b5;color:#4e565b}
.n-on{background:#525e6b;color:#333b44}
.n-e{height:16px;background:#aab2b5}
.pager{display:flex;justify-content:space-between;align-items:center;padding:2px 23px 0 21px;font-size:5.400px;color:#444;height:15px}
.pager i{display:block;width:10px;height:11px;background:#4d5660;color:#ddd;text-align:center;line-height:10px;font-size:9px}

/* center */
.center{border-left:2px solid transparent;display:flex;flex-direction:column;min-width:0}
.upper{display:flex;height:345px;flex:none}
.mainp{width:443px;flex:none;display:flex;flex-direction:column;min-width:0}
.top{height:129px;display:flex;flex:none}
.form{width:305px;flex:none;font-size:5.800px;color:#555;padding-left:1px}
.f-title{font:bold 5.200px/7px "Liberation Sans",sans-serif;color:#33383c;letter-spacing:.1px}
.f-row{display:flex;align-items:center;padding-left:5px}
.f-r1{height:11px}.f-r2{height:13px}.f-r3{height:13px;margin-top:2px}
.f-lab{width:58px;flex:none}
.f-val{font:bold 5.500px "Liberation Sans",sans-serif;color:#76ac32;white-space:nowrap}
.f-s{width:53px;flex:none;margin-top:-4px}
.f-w{width:56px;white-space:nowrap}
.form .f-r1 .f-val,.form .f-r3 .f-val{letter-spacing:.2px}
.f-grid{display:grid;grid-template-columns:82px 83px 120px;grid-auto-rows:23px;padding-left:6px;margin-top:5px}
.cell b{display:block;font:bold 5.200px/10px "Liberation Sans",sans-serif;color:#33383c;letter-spacing:.1px;white-space:nowrap}
.cell p{margin:0;padding-left:3px;line-height:10px;font-size:5.800px;color:#555;white-space:nowrap}
.cell p em{font:bold 5.500px "Liberation Sans",sans-serif;color:#76ac32}
.cell p.ind{padding-left:7px}
sub,sup{font-size:.7em;line-height:0}
.cell p.withbtn{display:flex;align-items:center}
.withbtn span{width:48px;flex:none}
.btn{font:5.800px "Open Sans",sans-serif;color:#555;background:#d4d9dc;border:0;padding:0}
.btn-t{width:32px;height:13px;flex:none;margin-top:-4px}
.cell-pw{position:relative}
.btn-p{position:absolute;left:38px;top:4px;width:29px;height:13px}
.cpanel{width:135px;flex:none;font-size:5.700px;color:#555;padding-top:1px}
.ctabs{display:flex;height:10px;margin-left:0;padding-top:.5px}
.ctabs span{border:1px solid #c5cdd1;border-bottom:0;padding:0 9px;line-height:9px;white-space:nowrap}
.ctabs span.on{background:#e9eff1;padding:0 6px;border-left:0}
.cbox{border:1px solid #c5cdd1;height:115px;background:#edf1f3;padding:0 1px}
.cinfo{display:flex;height:10px;align-items:center;gap:13px;padding-left:1px;margin-top:0}
.chart-s{display:block;width:135px;height:104px;margin-left:-2px}
.bgw{fill:#fff}
.g-s{fill:none;stroke:#3f3f3f;stroke-width:.8}
.g-s2{fill:none;stroke:#666;stroke-width:.7}
.t-s{font:6.300px "Liberation Sans",sans-serif;fill:#333}
.t-end{text-anchor:end}
.t-mid{text-anchor:middle}
.b-blue{fill:#0b6fc6}
.b-white{fill:#f0f4f8}
.b-purple{fill:#9a2f66}
.b-light{fill:#cfe1f3}
.b-cream{fill:#fbf6cc}
.b-dark{fill:#6d2670}
.l-navy,.l-olive{fill:none;vector-effect:non-scaling-stroke}
.l-navy{stroke:#272c70;stroke-width:.6}
.l-olive{stroke:#bdbf2c;stroke-width:.8}
.l-mag{stroke:#b45cb8;stroke-width:1}
.ttabs{display:flex;height:10px;font-size:5.700px;color:#555;flex:none}
.ttabs span{display:block;line-height:9px;border:1px solid #c5cdd1;border-left:0;border-bottom:0;text-align:center;white-space:nowrap}
.ttabs span:nth-child(1){width:64px;background:#eef2f4;border-left:1px solid #c5cdd1}
.ttabs span:nth-child(2){width:50px}
.ttabs span:nth-child(3){width:72px}
.ttabs span:nth-child(4){width:65px}
.ttabs span:nth-child(5){width:58px}
.tbox{flex:1;border:1px solid #c5cdd1;border-top:0;display:flex;background:#e9eff1;min-height:0}
.grid{border-collapse:collapse;table-layout:fixed;width:410px;height:92px;flex:none;font-size:5.400px;color:#444;align-self:flex-start}
.c1{width:18.500px}.c2{width:19.500px}.c3{width:87px}.c3b{width:17.700px}.c4{width:28.300px}.c5{width:15px}.c6{width:18px}.c7{width:18.700px}.c8{width:25px}.c9{width:32px}.c10{width:25.300px}.c11{width:26px}.c12{width:19.300px}.c13{width:19px}
.grid th{font-weight:400;height:24px;background:#eef2f4;border-right:1px solid #dfe5e8;line-height:6.500px;padding:0;white-space:nowrap}
.grid td{border:1px solid #6f767b;border-width:1px;padding:0 1px;overflow:hidden;white-space:nowrap;background:#dfe5e7;line-height:7px}
.r-a td{height:16px}
.r-b td{height:9.500px}
.grid td.m{text-align:center}
.grid td.n{text-align:right}
.grid td.g{color:#76ac32}
.grid td.g:nth-child(3){font-size:5px}
.grid td.wrap{white-space:normal;word-spacing:9px;line-height:6px;padding:0}
.grid td.lh{white-space:normal;line-height:6px}
.grid td.split{background:linear-gradient(#6f767b,#6f767b) no-repeat 50% 0/1px 100%,#dfe5e7}
.d{float:right;width:8px;height:8px;line-height:8px;background:#fafbfb;text-align:center;color:#555;font-size:6px;margin-left:1px}
.d.dc{float:none;display:inline-block}
.sw{width:9px;height:6px;vertical-align:-1px;margin-right:1px}
.sl{width:10px;height:6px;vertical-align:-1px;margin-right:1px}
.st{width:29px;height:8px;display:block;margin:0 auto}
.pen{float:right;color:#999;font-size:6px;margin-right:1px}
.ttools{margin-left:12px;width:12px;flex:none;display:flex;flex-direction:column;align-items:center;gap:4.700px;padding-top:2px;fill:#6e7579}
.ttools svg{width:10px;height:10px;flex:none}
.side{width:155px;flex:none;display:flex;flex-direction:column;padding-left:4px}
.side-scroll{height:339px;display:flex;overflow:hidden;flex:none;font-size:6.200px;color:#4d5258;line-height:9px}
.side-col{width:129px;flex:none}
.tag{display:inline-block;background:#4d5660;color:#e8ecee;font-size:5.200px;line-height:10px;padding:0 2px;margin-top:1px;vertical-align:top}
.sbox{border:1px solid #c2cdd8;padding:4.500px 3.500px 0;background:#e9eff1;margin-bottom:2px}
.sbox p{margin:0 0 4.500px;white-space:nowrap}
.sbox em{color:#76ac32}
.sbox em sup{font-size:.7em}
.sbox hr{border:0;border-top:1px solid #9aa2a7;margin:-2.500px 0 3.500px}
.two{display:grid;grid-template-columns:67px 1fr;align-items:center;margin-bottom:4.500px}
.two p{margin:0}
.side-bar{width:9px;flex:none;margin-left:1px;text-align:center;color:#aaa;font-size:7px;line-height:8px;padding-top:4px}
.side-bar i{display:block;height:45px;background:#b9c0c4;margin-top:0}
.side-h{height:6px;display:flex;align-items:center;font-size:7px;color:#666;padding-left:4px;line-height:6px}
.side-h span{width:6px}
.side-h i{display:block;width:16px;height:5px;background:#bfc6ca;margin-left:4px}
.side-h span:last-child{margin-left:84px}
.report{flex:1;padding:1px 0 0 1px;font-size:5.400px;color:#555}
.rep-t{font:bold 5.200px/9px "Liberation Sans",sans-serif;color:#33383c;letter-spacing:.1px;margin-top:0}
.rep-h{display:grid;grid-template-columns:16px 70px 1fr;height:10px;line-height:10px;background:#eef2f4;text-align:center;margin-right:20px}
.rep-h span:first-child{border-right:1px solid #c5cdd1}
.rep-r{padding-left:17px;line-height:9px;border-top:1px solid #c5cdd1}
.handle-l{position:absolute;left:0;top:185px;width:11px;height:73px;background:#5b9e12;display:flex;align-items:center;justify-content:center}
.handle-l svg{width:9px;height:15px}
.handle-r{position:absolute;right:0;top:185px;width:12px;height:73px;background:#fff;display:flex;align-items:center;justify-content:center}
.handle-r svg{width:10px;height:15px}
.w-base{flex:1;background:#8b8b8b}

/* ---------- laptop ---------- */
.laptop{position:absolute;left:142px;top:434px;width:678px;height:426px;background:linear-gradient(90deg,#cfcfcf,#f2f2f2 2px);border-radius:17px 17px 0 0;padding:3px 4px 0 3px;box-shadow:0 0 3px rgba(0,0,0,.25);filter:blur(.25px)}
.bezel{position:relative;height:423px;background:linear-gradient(180deg,#1d1c1b 0,#1e1d1c 30px,#2d2a28 200px);border-radius:14px 14px 0 0;padding:21px 20px 0 20px;border-bottom:2px solid #121212}
.cam{position:absolute;left:354px;top:10px;width:4px;height:4px;border-radius:50%;background:#3a3a3a}
.bez-line{position:absolute;left:0;right:0;bottom:5px;height:1px;background:#444240}
.app{position:relative;width:632px;height:378px;background:#1a1a1a;color:#cfcfcf;overflow:hidden;margin-left:0}
.d-title{height:10px;background:#4a4a4a;display:flex;align-items:center;font-size:4.900px;color:#e4e4e4;padding-left:2px}
.d-logo{width:6px;height:6px;margin-right:2px;flex:none}
.d-title-text{flex:1;white-space:nowrap}
.d-ctrls{display:flex;align-items:center;gap:13px;margin-right:7px}
.d-ctrls .c-x{font-size:9px;line-height:7px}
.d-head{display:grid;grid-template-columns:116px 1fr;height:22px}
.d-head-l,.d-head-r{display:flex;flex-direction:column}
.d-menu{height:12px;display:flex;align-items:center;gap:6.500px;padding-left:4px;font-size:5.300px;background:#1f1f1f}
.d-h1{padding-left:0;font-size:5.800px;line-height:10px;letter-spacing:.1px;background:#111;color:#ccc}
.d-h2{padding-left:3px;font-size:5.900px;letter-spacing:.08px;line-height:10px;background:#111;color:#ccc}
.d-tools{height:12px;display:flex;align-items:center;padding-left:5px;gap:5px;fill:#ededed;color:#ededed;background:#1f1f1f}
.d-tools svg{width:7px;height:7px;flex:none}
.d-tools svg.sm{width:5px;margin:0 -1px}
.d-tools svg.hot{outline:1px solid #2b5a9a;width:9px;height:8px;margin:0 1px}
.d-tools svg.gap{margin-left:2px;width:9px}
.d-tools b{font:bold 7px "Liberation Sans",sans-serif;margin-left:1px}
.d-body{display:grid;grid-template-columns:116px 1fr;height:346px}
.d-left{display:flex;flex-direction:column;width:114px;min-width:0}
.d-ltools{height:12px;display:flex;align-items:center;gap:3px;fill:#d8d8d8;flex:none}
.d-ltools svg{width:7px;height:7px;flex:none}
.dim2{opacity:.25}
.d-ltools .push{margin-left:auto;margin-right:0}
.d-treebox{height:201px;display:flex;flex:none;overflow:hidden}
.d-tree{--u:.866;--rh:6.8px;--line:#606060;color:#e6e6e6;font-size:4.550px;letter-spacing:.11px;margin-left:-2px}
.d-tree .exp{background:#f0f0f0;border:0}
.d-tree .sel span{background:#fff;color:#111;padding-left:2px;margin-left:-2px;line-height:6.800px;flex:1}
.d-vscroll{width:7px;flex:none;background:#fff;color:#444;font-size:5px;line-height:6px;text-align:center;display:flex;flex-direction:column;margin-left:auto}
.d-vscroll i{display:block;height:130px;background:#d2d2d2}
.d-vscroll .dn{margin-top:auto}
.d-hscroll{height:7px;flex:none;background:#fff;display:flex;align-items:center;font-size:6px;line-height:6px;color:#444}
.d-hscroll span{width:6px;text-align:center;flex:none}
.d-hscroll i{display:block;width:72px;height:6px;background:#d2d2d2}
.d-hscroll span:last-child{margin-left:24px}
.d-scale{--sw:108px;--sh:6px;height:32px;padding:0 0 0 4px}
.d-scale .sc-top{height:7px;color:#ccc;padding-left:23px;font-size:4.800px}
.d-scale .sc-arrow{width:5px;height:7px}
.d-scale .sc-bar{border:.5px solid #333;margin-top:0}
.d-scale .sc-labels{color:#ddd;font-size:3.200px;height:4.500px;line-height:4.500px;width:104px}
.d-scale .sc-ticks{border-bottom:1px solid #ddd;background:repeating-linear-gradient(90deg,#ddd 0 1px,transparent 1px 7.700px);height:2px}
.d-scale .sc-pin{color:#bbb;padding-left:22px;font-size:5px;line-height:5px}
.d-lnav{display:flex;flex-direction:column;font-size:5px;color:#bdbdbd;margin-top:0;gap:.5px}
.d-lnav a{display:block;padding-left:17px;white-space:nowrap;background:#474747}
.d-lnav .s{height:8px;line-height:8px}
.d-lnav .on2{background:#333;color:#ddd}
.d-lnav .m{height:10.500px;line-height:10.500px}
.d-lnav .on{background:#181818}
.d-lnav .e{height:15px}
.d-pager{display:flex;justify-content:space-between;align-items:center;padding:0 18px 0 16px;height:11px;background:#0f0f0f;font-size:4.800px;color:#bbb}
.d-pager i{display:block;width:9px;height:10px;background:#4d5a68;color:#ddd;text-align:center;line-height:9px;font-size:8px}
.d-center{display:flex;flex-direction:column;min-width:0;padding-left:0}
.d-upper{display:flex;height:301px;flex:none}
.d-main{width:383px;flex:none;position:relative;display:flex;flex-direction:column;background:#141414;border-right:1px solid #2a2a2a}
.d-form{height:0;flex:none;font-size:5.200px;color:#c8c8c8}
.d-form .f-title{color:#ddd;padding-left:1px;font-size:4.600px;line-height:9px;height:8px}
.df-row{display:flex;align-items:center;height:11px;padding-left:5px;white-space:nowrap}
.df-row span{width:50px;flex:none}
.df-row em{font:4.900px "Liberation Sans",sans-serif;color:#4fa614;letter-spacing:.2px}
.df-gap{height:14px;margin-top:1px}
.df-cell{height:20px;padding-left:5px}
.df-cell b{display:block;font:bold 4.600px/10px "Liberation Sans",sans-serif;color:#ddd;white-space:nowrap}
.df-cell p{margin:0;padding-left:3px;line-height:9px;font-size:5px}
.df-cell p.ind{padding-left:8px}
.df-cell em{color:#4fa614;font:bold 4.800px "Liberation Sans",sans-serif}
.d-ctabs{position:absolute;left:263px;top:0;height:10px;display:flex;font-size:5px;color:#c8c8c8}
.d-ctabs span{border:1px solid #888;border-bottom:0;padding:0 7px;line-height:8px;white-space:nowrap}
.d-ctabs span.on{padding:0 4px;border-left:0;background:#1a1a1a}
.d-cbox{position:absolute;left:263px;top:10px;width:119px;height:102px;border:1px solid #5a5a5a;font-size:5px;color:#c8c8c8}
.d-cinfo{display:flex;gap:14px;padding:2px 0 0 2px;line-height:8px}
.d-tb{margin-top:113px;flex:1;display:flex;flex-direction:column;min-height:0}
.d-ttabs{height:9px;font-size:5px;flex:none}
.d-ttabs span{display:block;width:60px;border:1px solid #888;border-bottom:0;line-height:7px;text-align:center;white-space:nowrap}
.d-tbox{flex:1;border:1px solid #555;position:relative;font-size:5px;background:#1a1a1a}
.d-th{width:14px;height:20px;line-height:20px;text-align:center;border:1px solid #666;border-width:0 1px 1px 0}
.d-tr{display:grid;grid-template-columns:14px 20px;height:9px;line-height:9px;text-align:center;border-bottom:1px solid #666}
.d-rtools{position:absolute;right:2px;top:2px;display:flex;flex-direction:column;gap:4.700px;fill:#d0d0d0}
.d-rtools svg{width:8px;height:8px;flex:none}
.d-side{flex:1;min-width:0;display:flex;flex-direction:column;padding-left:4px}
.d-side-scroll{height:293px;display:flex;overflow:hidden;flex:none;font-size:5.300px;line-height:7.600px;color:#d4d4d4}
.d-side-col{width:111px;flex:none}
.d-tag{display:inline-block;background:#5b6673;color:#f0f0f0;font-size:4.500px;line-height:9px;padding:0 2px;margin-top:3px;vertical-align:top}
.d-sbox{border:1px solid #48525c;padding:3.500px 3px 0;background:#161616;margin-bottom:3px}
.d-sbox p{margin:0 0 3.900px;white-space:nowrap}
.d-sbox em{color:#4a9d16}
.d-sbox hr{border:0;border-top:1px solid #3d3d3d;margin:-1.700px 0 3.200px}
.d-sbox .two{grid-template-columns:58px 1fr;margin-bottom:3.900px}
.d-sbox .two p{margin:0}
.d-tag2{margin-top:0;background:#4e5864}
.d-sbox2{height:7px;border:1px solid #6b6b6b;border-bottom:0}
.d-side-bar{width:8px;flex:none;margin-left:2px;color:#666;font-size:6px;line-height:5px;text-align:center;display:flex;flex-direction:column;padding-top:1px}
.d-side-bar i{display:block;height:27px;background:#5c5c5c}
.d-side-bar .dn{margin-top:auto;padding-bottom:14px}
.d-side-h{height:8px;display:flex;align-items:center;font-size:7px;line-height:7px;color:#666;padding-left:6px;background:#101010;margin-top:-1px}
.d-side-h span{width:5px}
.d-side-h i{display:block;width:39px;height:7px;background:#505050;margin-left:1px}
.d-side-h span:last-child{margin-left:47px}
.d-report{height:33px;flex:none;position:relative;display:block}
.d-rep-t{font:bold 4.600px/8px "Liberation Sans",sans-serif;color:#ddd;padding-left:1px;height:9px}
.d-rep-grid{margin-left:2px;margin-right:8px;font-size:4.250px;color:#ccc}
.d-rep-h{display:grid;grid-template-columns:12px 43px 1fr;height:8px;line-height:8px;text-align:center;border-top:1px solid #888;border-bottom:1px solid #888}
.d-rep-h span+span,.d-rep-r span+span{border-left:1px solid #888}
.d-rep-r{display:grid;grid-template-columns:12px 43px 1fr;height:7.500px;line-height:7px;border-bottom:1px solid #888;white-space:nowrap}
.d-rep-r span:first-child{text-align:center}
.d-rep-r span+span{padding-left:1px}
.d-rep-sb{position:absolute;right:1px;top:8px;width:7px;height:22px;background:#fff;color:#333;font-size:5px;line-height:4px;text-align:center;display:flex;flex-direction:column;justify-content:space-between}
.d-rep-sb i{display:block;height:11px;background:#d2d2d2}
.d-tabs{display:flex;height:10px;flex:none;margin-top:1px;gap:1px}
.d-tabs a{display:flex;align-items:center;justify-content:center;width:59.500px;background:#4a4a4a;fill:#e6e6e6;border-bottom:1px solid #222}
.d-tabs a svg{width:7px;height:7px}
.d-tabs .k{background:#151515}
.d-tabs .r{background:#ee2a08;fill:#e8a090}
.d-tabs .gr{background:#66b80c;fill:#b9d78a}
.d-tabs .close{width:32px;background:#c81c1c;color:#f5d8d8;font-size:5px}
.d-handle-l{position:absolute;left:0;top:171px;width:7px;height:64px;background:#5b9e12;display:flex;align-items:center;justify-content:center;overflow:hidden}
.d-handle-l svg{width:8px;height:12px;flex:none}
.d-handle-r{position:absolute;right:0;top:171px;width:8px;height:64px;background:#fff;display:flex;align-items:center;justify-content:center}
.d-handle-r svg{width:7px;height:12px;flex:none}

/* dialog */
.dlg{position:absolute;left:145px;top:55px;width:342px;height:244px;background:#161616;display:flex;flex-direction:column}
.dlg-t{height:13px;background:#474747;display:flex;justify-content:space-between;align-items:center;padding-left:3px;font-size:5px;letter-spacing:-.1px;color:#ddd;flex:none}
.dlg-tabs{height:8px;display:flex;font-size:5px;color:#d8d8d8;flex:none;padding-left:1px}
.dlg-tabs span{display:block;width:24px;line-height:7px;text-align:center;border:1px solid #777;border-bottom:0}
.dlg-tabs .on{width:27px;background:#161616}
.dlg-box{height:205px;margin:0;width:342px;border:1px solid #777;background:#0f0f0f;flex:none}
.chart-b{display:block;width:340px;height:203px}
.t-b{font:4.600px "Open Sans",sans-serif;fill:#c2c2c2}
.t-gr{fill:#4a9d16}
.t-bb{font:bold 4.600px "Open Sans",sans-serif;fill:#c2c2c2}
.t-n{font:5.500px "Open Sans",sans-serif;fill:#cfcfcf}
.t-h{font:4.400px "Open Sans",sans-serif;fill:#cfcfcf}
.radio{fill:#fff}
.radio-on{fill:#111;stroke:#eee;stroke-width:1}
.leg-n{stroke:#1f2a6a;stroke-width:1}
.leg-m{stroke:#b82fb3;stroke-width:1}
.leg-o{stroke:#9aa01c;stroke-width:1}
.g-b{fill:none;stroke:#b5b5b5;stroke-width:.6}
.g-b2{fill:none;stroke:#8a8a8a;stroke-width:.7}
.g-t{fill:none;stroke:#bbb;stroke-width:.6}
.chart-b .l-navy{stroke:#25306e;stroke-width:.7}
.chart-b .l-olive{stroke:#a2ab26;stroke-width:1}
.l-magb{stroke:#c12fb9;stroke-width:1}
.s1{fill:#cfe4f7}.s2{fill:#ef9a72}.s3{fill:#d6ecf7}.s4{fill:#fdf6c8}.s5{fill:#a03068}.s6{fill:#8f9cef}.s7{fill:#0b6fc6}.s8{fill:#6d2670}
.dlg-btns{flex:1;display:flex;justify-content:flex-end;gap:3px;padding:3px 5px 3px 0}
.dlg-btns button{width:38px;background:#000;border:0;color:#ddd;font:5px "Open Sans",sans-serif;padding:0}

/* base */
.base{position:absolute;left:72px;top:860px;width:814px;height:23px;background:linear-gradient(90deg,rgba(150,150,150,.35) 0,rgba(255,255,255,0) 4%,rgba(255,255,255,0) 91%,rgba(150,150,150,.45) 97%,rgba(255,255,255,.3) 100%),linear-gradient(180deg,#eeeeee 0,#e6e6e6 12px,#c8c8c8 14px,#aeaeae 18px,#9c9c9c 23px);clip-path:polygon(0 0,100% 0,100% 60%,95.200% 100%,4.800% 100%,0 60%);display:flex;justify-content:flex-end;align-items:flex-start;gap:5px;padding:6px 55px 0 0}
.pill{display:block;width:20px;height:3.500px;background:#777;border-radius:2px;margin-right:3px}
.dot{display:block;width:4px;height:4px;background:#777;border-radius:50%}
```
